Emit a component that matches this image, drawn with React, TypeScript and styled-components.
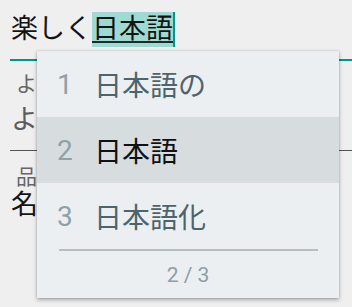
import styled, { createGlobalStyle } from 'styled-components';

const GlobalStyle = createGlobalStyle`
  html, body {
    margin: 0;
    padding: 0;
    background-color: #efefef;
  }

  body {
    font-family: Roboto, "Noto Sans CJK JP", sans-serif;
    overflow: hidden;
  }
`;

const Page = styled.div`
  position: relative;
  height: 307px;
  padding: 12px 0 0 10px;
  box-sizing: border-box;
`;

const InputLine = styled.div<{ $color?: string; $gap?: number }>`
  display: flex;
  height: 35px;
  margin-top: ${(p) => p.$gap ?? 0}px;
  padding-left: 1px;
  font-size: 27px;
  line-height: 35px;
  color: ${(p) => p.$color ?? '#141414'};
  white-space: nowrap;
`;

const Composing = styled.span`
  display: inline-block;
  height: 35px;
  background:
    linear-gradient(to bottom, transparent 29px, #1d2a2a 29px, #1d2a2a 31px, transparent 31px),
    #9edad2;
  border-right: 2px solid #009688;
`;

const Underline = styled.div<{ $active?: boolean; $gap: number }>`
  margin-top: ${(p) => p.$gap}px;
  height: ${(p) => (p.$active ? 2 : 1)}px;
  background-color: ${(p) => (p.$active ? '#009688' : '#555')};
`;

const Label = styled.div<{ $gap: number }>`
  margin-top: ${(p) => p.$gap}px;
  padding-left: 6px;
  font-size: 21px;
  line-height: 20px;
  color: #666;
  white-space: nowrap;
`;

const Popup = styled.div`
  position: absolute;
  left: 37px;
  top: 51px;
  width: 302px;
  background-color: #eceff1;
  box-shadow: 0 2px 4px rgba(0, 0, 0, 0.28), 0 0 2px rgba(0, 0, 0, 0.18);
`;

const Candidate = styled.div<{ $selected?: boolean }>`
  display: flex;
  align-items: center;
  height: 66px;
  padding-left: 20px;
  background-color: ${(p) => (p.$selected ? '#d7dcdf' : 'transparent')};
  font-size: 28px;
`;

const Index = styled.span`
  width: 37px;
  color: #8fa1a8;
`;

const Word = styled.span<{ $selected?: boolean }>`
  color: ${(p) => (p.$selected ? '#111' : '#4d646c')};
`;

const Divider = styled.div`
  height: 2px;
  margin: 0 21px 0 22px;
  background-color: #b3bfc5;
`;

const Pager = styled.div`
  height: 47px;
  display: flex;
  align-items: center;
  justify-content: center;
  font-size: 21px;
  color: #8e9ea5;
`;

const candidates = ['日本語の', '日本語', '日本語化'];
const selected = 1;

const App = () => {
  return (
    <>
      <GlobalStyle />
      <Page>
        <InputLine>
          楽しく<Composing>日本語</Composing>
        </InputLine>
        <Underline $active $gap={12} />

        <Label $gap={13}>よみ</Label>
        <InputLine $color="#5c5c5c" $gap={9}>
          よみがな
        </InputLine>
        <Underline $gap={12} />

        <Label $gap={16}>品詞</Label>
        <InputLine $gap={1}>名詞</InputLine>

        <Popup>
          {candidates.map((word, index) => (
            <Candidate key={word} $selected={index === selected}>
              <Index>{index + 1}</Index>
              <Word $selected={index === selected}>{word}</Word>
            </Candidate>
          ))}
          <Divider />
          <Pager>
            {selected + 1} / {candidates.length}
          </Pager>
        </Popup>
      </Page>
    </>
  );
};

export default App;
